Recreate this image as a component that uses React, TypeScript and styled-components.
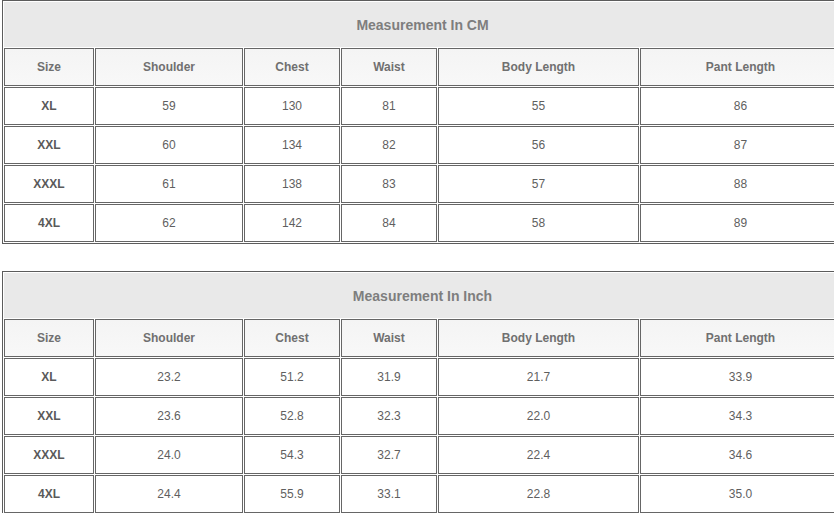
import React from "react";
import styled, { createGlobalStyle } from "styled-components";

const Global = createGlobalStyle`
  html, body { margin: 0; padding: 0; background: #ffffff; overflow: hidden; }
  body { font-family: "Liberation Sans", Arial, sans-serif; }
`;

const Page = styled.div`
  display: flex;
  flex-direction: column;
  gap: 27px;
  padding-left: 2px;
  width: 900px;
`;

const Table = styled.table`
  border-collapse: separate;
  border-spacing: 1px;
  border-left: 1px solid #5c5c5c;
  border-top: 1px solid #5c5c5c;
  border-bottom: 1px solid #5c5c5c;
  border-right: 1px solid #5c5c5c;
  width: 841px;
  table-layout: auto;
`;

const TitleCell = styled.td`
  height: 45px;
  box-sizing: border-box;
  padding: 0;
  background: #e9e9e9;
  text-align: center;
  vertical-align: middle;
  font-size: 14px;
  font-weight: bold;
  color: #7e7e7e;
`;

const HeadCell = styled.td<{ $w: number }>`
  width: ${(p) => p.$w}px;
  height: 38px;
  box-sizing: border-box;
  padding: 0;
  border: 1px solid #666666;
  background: linear-gradient(#f4f4f4, #f8f8f8);
  text-align: center;
  vertical-align: middle;
  font-size: 12px;
  font-weight: bold;
  color: #707070;
`;

const Cell = styled.td<{ $bold?: boolean }>`
  height: 38px;
  box-sizing: border-box;
  padding: 0;
  border: 1px solid #666666;
  background: #ffffff;
  text-align: center;
  vertical-align: middle;
  font-size: 12px;
  font-weight: ${(p) => (p.$bold ? "bold" : "normal")};
  color: ${(p) => (p.$bold ? "#5a5a5a" : "#5f5f5f")};
`;

const columns: { label: string; w: number }[] = [
  { label: "Size", w: 90 },
  { label: "Shoulder", w: 148 },
  { label: "Chest", w: 96 },
  { label: "Waist", w: 96 },
  { label: "Body Length", w: 201 },
  { label: "Pant Length", w: 201 },
];

const cmRows = [
  ["XL", "59", "130", "81", "55", "86"],
  ["XXL", "60", "134", "82", "56", "87"],
  ["XXXL", "61", "138", "83", "57", "88"],
  ["4XL", "62", "142", "84", "58", "89"],
];

const inchRows = [
  ["XL", "23.2", "51.2", "31.9", "21.7", "33.9"],
  ["XXL", "23.6", "52.8", "32.3", "22.0", "34.3"],
  ["XXXL", "24.0", "54.3", "32.7", "22.4", "34.6"],
  ["4XL", "24.4", "55.9", "33.1", "22.8", "35.0"],
];

function SizeTable({ title, rows }: { title: string; rows: string[][] }) {
  return (
    <Table>
      <tbody>
        <tr>
          <TitleCell colSpan={6}>{title}</TitleCell>
        </tr>
        <tr>
          {columns.map((c) => (
            <HeadCell key={c.label} $w={c.w}>
              {c.label}
            </HeadCell>
          ))}
        </tr>
        {rows.map((r) => (
          <tr key={r[0]}>
            {r.map((v, i) => (
              <Cell key={i} $bold={i === 0}>
                {v}
              </Cell>
            ))}
          </tr>
        ))}
      </tbody>
    </Table>
  );
}

export default function App() {
  return (
    <>
      <Global />
      <Page>
        <SizeTable title="Measurement In CM" rows={cmRows} />
        <SizeTable title="Measurement In Inch" rows={inchRows} />
      </Page>
    </>
  );
}
